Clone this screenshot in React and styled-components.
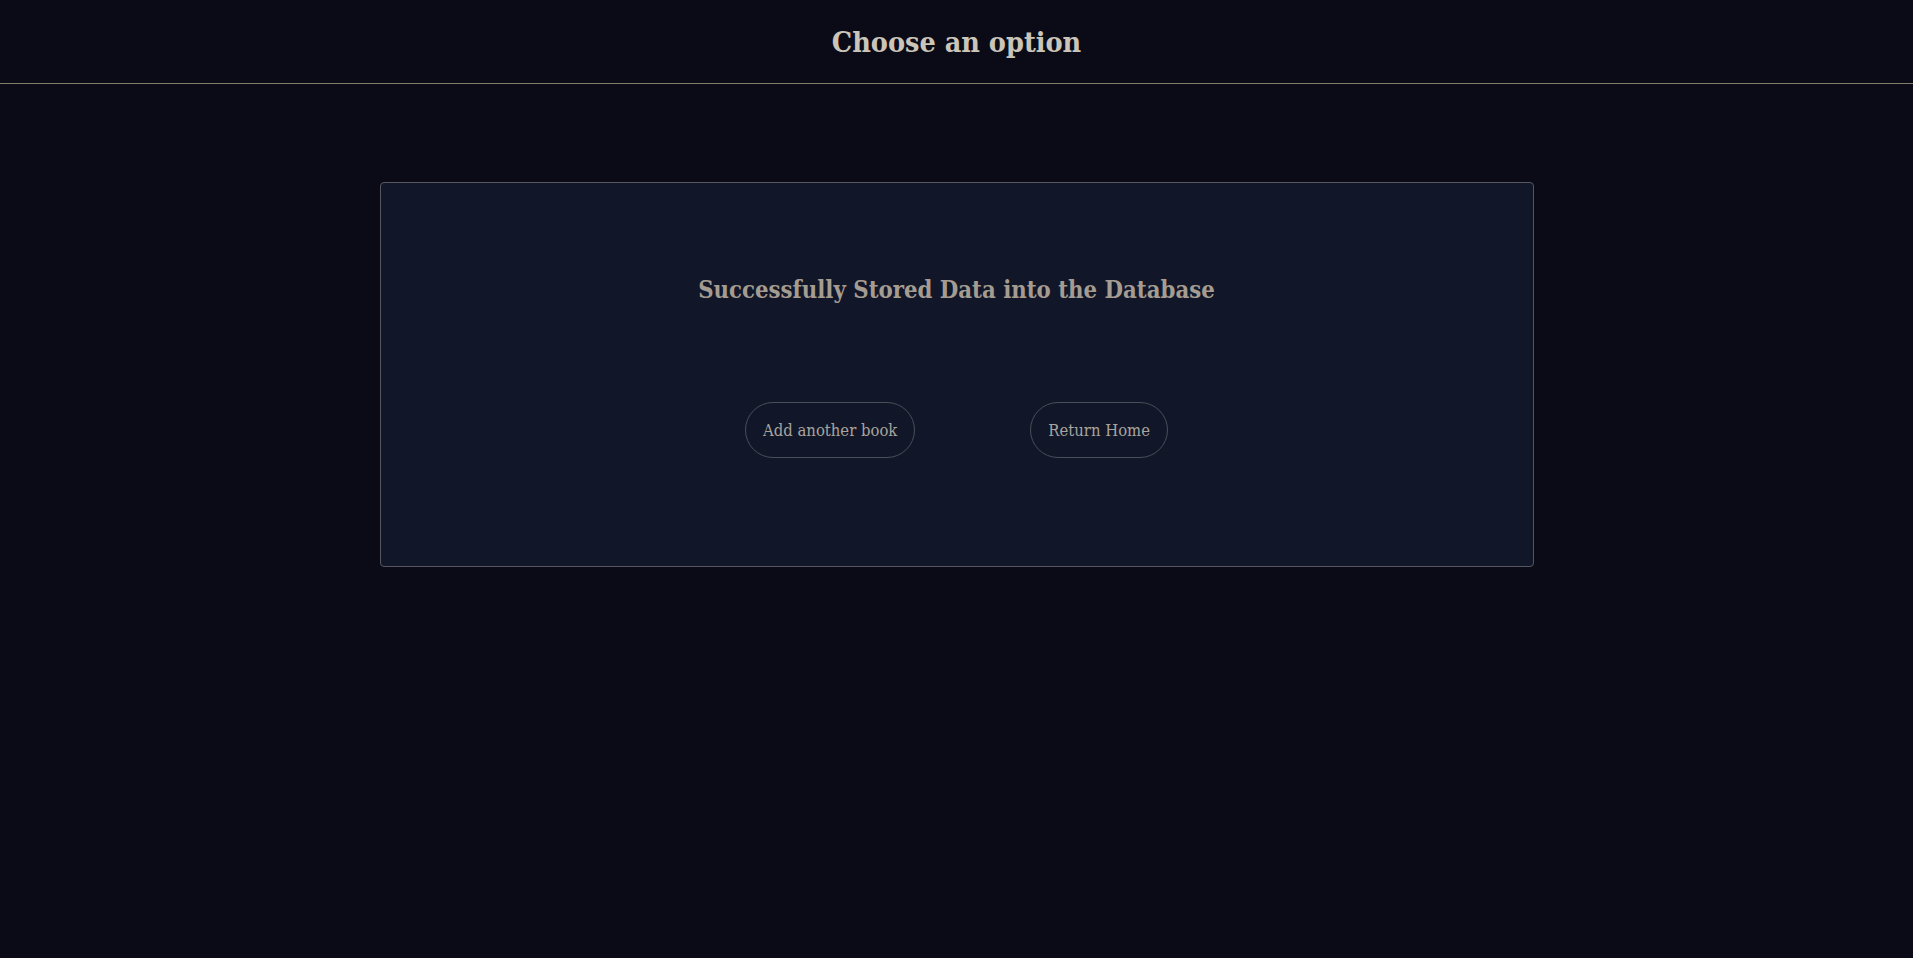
import React from "react";
import styled, { createGlobalStyle } from "styled-components";

const GlobalStyle = createGlobalStyle`
  html, body {
    margin: 0;
    padding: 0;
    background: #0a0b16;
  }

  body {
    font-family: "DejaVu Serif Condensed", "DejaVu Serif", "Liberation Serif", serif;
    font-stretch: condensed;
    min-height: 100vh;
  }
`;

const Page = styled.div`
  min-height: 100vh;
  background: #0a0b16;
`;

const Header = styled.header`
  height: 83px;
  display: flex;
  align-items: center;
  justify-content: center;
  border-bottom: 1px solid #857c6c;
`;

const Title = styled.h1`
  margin: 0;
  font-size: 28.5px;
  font-weight: 700;
  color: #cbc4b9;
`;

const Card = styled.section`
  box-sizing: border-box;
  width: 1154px;
  max-width: 90%;
  margin: 98px auto 0;
  padding: 91px 0 108px;
  background: #111729;
  border: 1px solid #55565f;
  border-radius: 4px;
  display: flex;
  flex-direction: column;
  align-items: center;
`;

const Message = styled.h2`
  margin: 0 0 96px;
  font-size: 23.7px;
  line-height: 32px;
  font-weight: 700;
  color: #a59c91;
`;

const Actions = styled.div`
  display: flex;
  gap: 115px;
`;

const PillButton = styled.button`
  height: 56px;
  padding: 0 17px;
  background: transparent;
  border: 1px solid #4b4d57;
  border-radius: 28px;
  font-family: inherit;
  font-stretch: inherit;
  font-size: 16.5px;
  color: #a8a49d;
  cursor: pointer;

  &:hover {
    border-color: #7d776b;
  }
`;

export default function App() {
  return (
    <Page>
      <GlobalStyle />
      <Header>
        <Title>Choose an option</Title>
      </Header>
      <Card>
        <Message>Successfully Stored Data into the Database</Message>
        <Actions>
          <PillButton>Add another book</PillButton>
          <PillButton>Return Home</PillButton>
        </Actions>
      </Card>
    </Page>
  );
}
